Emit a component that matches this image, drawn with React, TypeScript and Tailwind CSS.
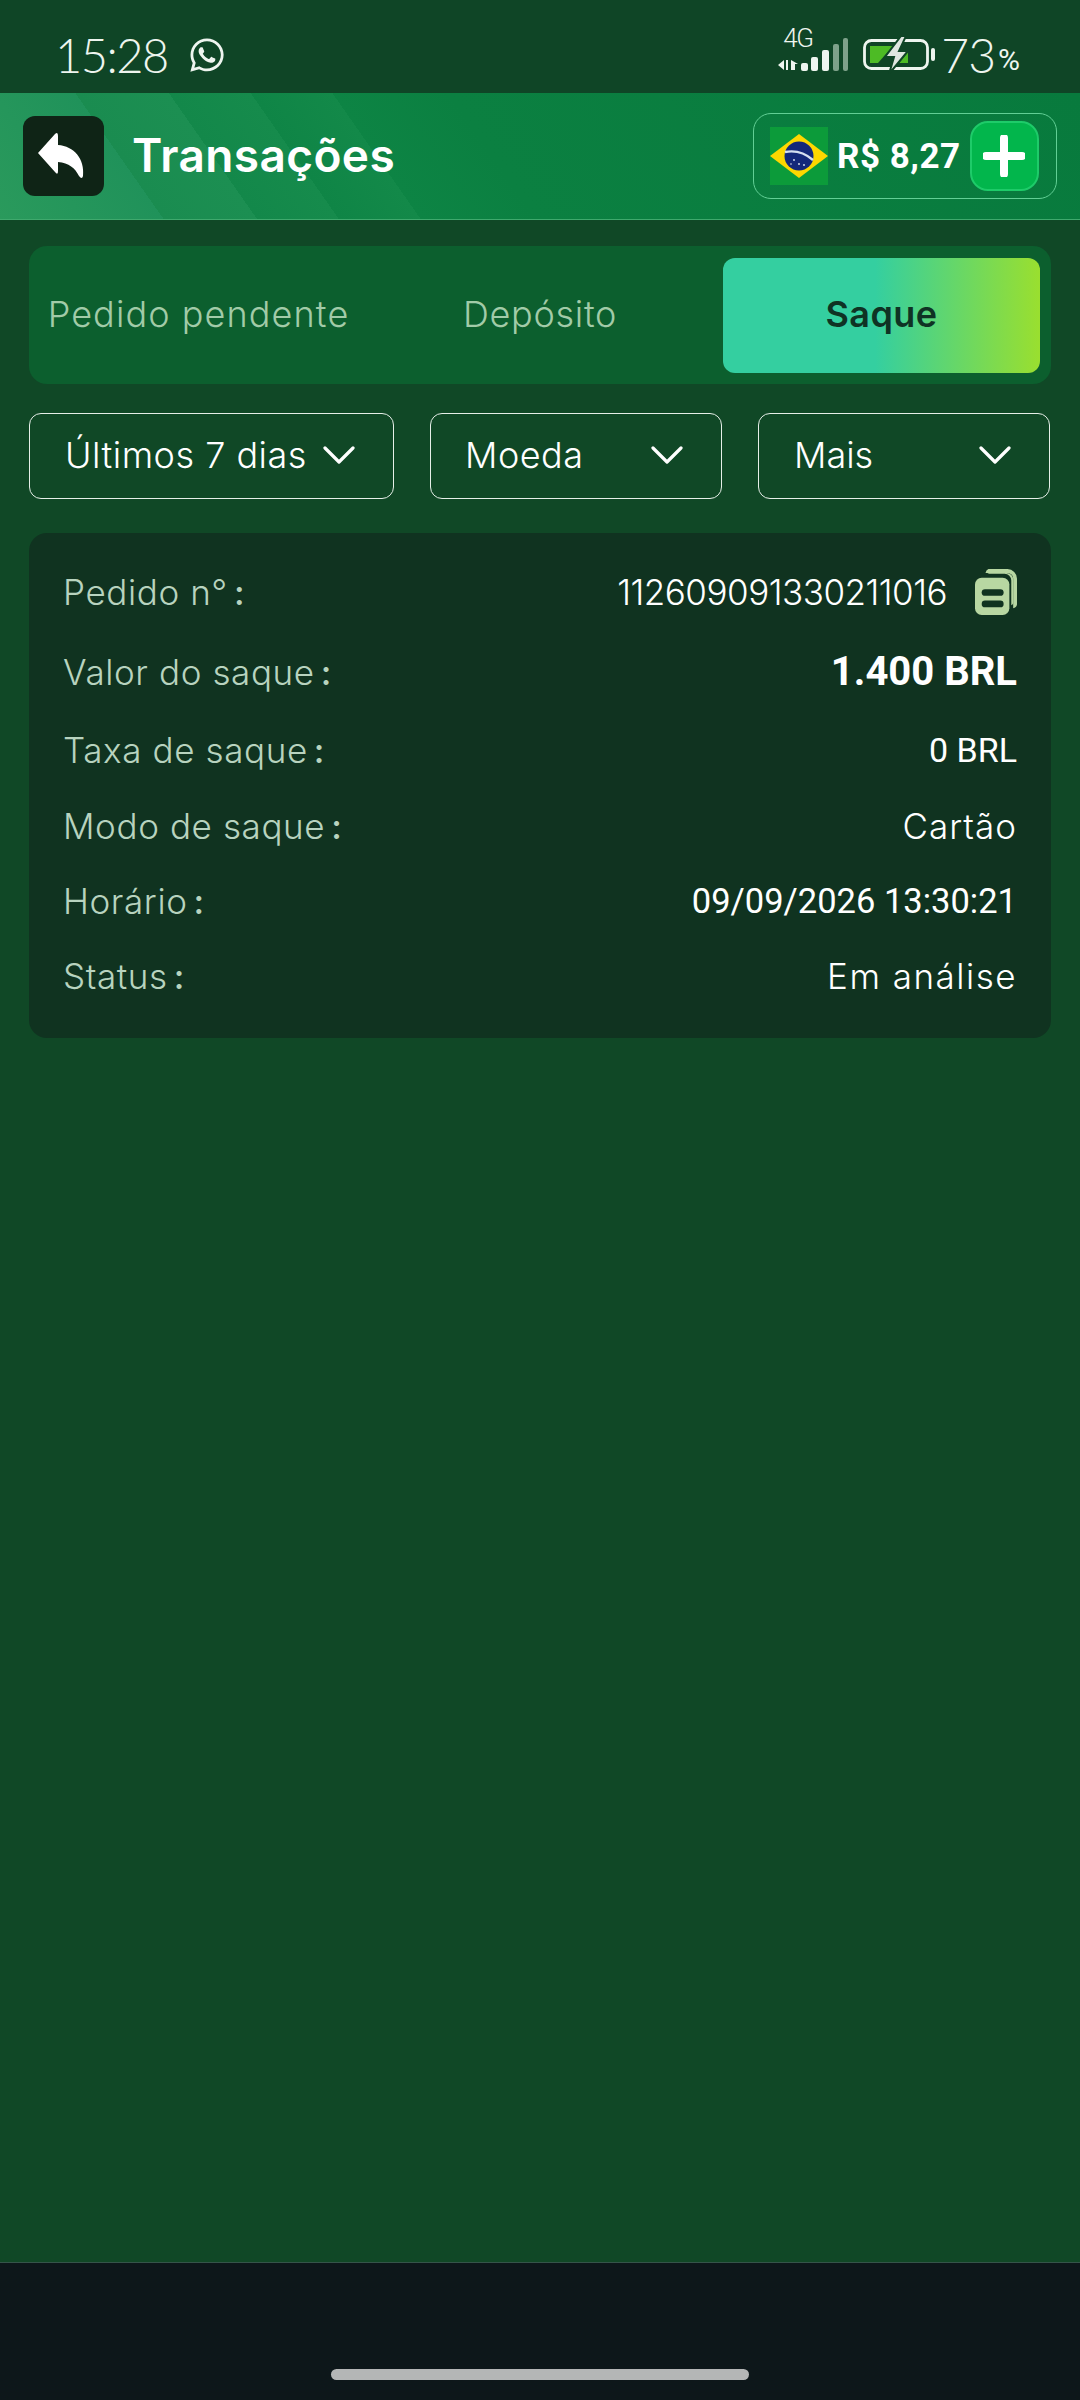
import React from "react";
import { FaWhatsapp } from "react-icons/fa";

const rows = [
  { label: "Pedido n°", value: "112609091330211016", h: "h-[80px]", cls: "font-['Inter',sans-serif] text-[35px] font-light tracking-[-0.5px]", copy: true },
  { label: "Valor do saque", value: "1.400 BRL", h: "h-[80px]", cls: "font-['Roboto',sans-serif] text-[40px] font-bold" },
  { label: "Taxa de saque", value: "0 BRL", h: "h-[77px]", cls: "font-['Roboto',sans-serif] text-[34px]" },
  { label: "Modo de saque", value: "Cartão", h: "h-[75px]", cls: "font-['Inter',sans-serif] text-[35px] font-light tracking-[1px]" },
  { label: "Horário", value: "09/09/2026 13:30:21", h: "h-[75px]", cls: "font-['Roboto',sans-serif] text-[34.5px]" },
  { label: "Status", value: "Em análise", h: "h-[75px]", cls: "font-['Inter',sans-serif] text-[35px] font-light tracking-[1.5px]" },
];

function Chevron() {
  return (
    <svg width="32" height="20" viewBox="0 0 32 20" fill="none" className="shrink-0">
      <path d="M2 3l14 14L30 3" stroke="#fff" strokeWidth="3.2" strokeLinecap="round" strokeLinejoin="round" />
    </svg>
  );
}

function Signal() {
  return (
    <svg width="70" height="34" viewBox="0 0 70 34" className="shrink-0">
      <path d="M0 27l6-5v10l-6-5zM8 22h2v10H8zM13 22l7 4h-3v6h-4z" fill="#eef5ef" />
      <rect x="23" y="25" width="7" height="8" rx="2" fill="#eef5ef" />
      <rect x="33" y="19" width="7" height="14" rx="2" fill="#eef5ef" />
      <rect x="44" y="12" width="7" height="21" rx="2" fill="#eef5ef" />
      <rect x="55" y="6" width="6" height="27" rx="2" fill="#7ea18a" />
      <rect x="65" y="0" width="5" height="33" rx="2" fill="#7ea18a" />
    </svg>
  );
}

function Battery() {
  return (
    <svg width="72" height="38" viewBox="0 0 72 38" className="shrink-0">
      <rect x="1.5" y="4.5" width="63" height="28" rx="7" fill="none" stroke="#eef5ef" strokeWidth="2.8" />
      <path d="M7 10h23L15 27H7z" fill="#4dbb25" />
      <path d="M36 27l9-11v11z" fill="#4dbb25" />
      <path d="M38 0L22 21h9l-5 17 19-23h-9l7-15z" fill="#dfe7e0" stroke="#0f4526" strokeWidth="2" />
      <rect x="68" y="12" width="4" height="13" rx="2" fill="#eef5ef" />
    </svg>
  );
}

function Flag() {
  return (
    <svg width="58" height="58" viewBox="0 0 58 58" className="shrink-0">
      <rect width="58" height="58" fill="#0c9b3a" />
      <path d="M29 7l29 22-29 22L0 29z" fill="#fed700" />
      <circle cx="29" cy="29" r="14.5" fill="#14287a" />
      <path d="M15 25c10-2 20 1 28 8" stroke="#d5dff0" strokeWidth="2.4" fill="none" />
      <circle cx="24" cy="33" r="0.9" fill="#dfe7f5" />
      <circle cx="29" cy="37" r="0.9" fill="#dfe7f5" />
      <circle cx="34" cy="38" r="0.9" fill="#dfe7f5" />
      <circle cx="21" cy="37" r="0.8" fill="#dfe7f5" />
    </svg>
  );
}

function BackArrow() {
  return (
    <svg width="81" height="80" viewBox="0 0 81 80">
      <path
        d="M15 37 L32 18 Q35 15 35 20 V29 C51 30 62 43 60 60 Q59 64 56 60 C52 52 46 47 35 46 V55 Q35 60 32 56 Z"
        fill="#fff"
      />
    </svg>
  );
}

function CopyIcon() {
  return (
    <svg width="42" height="46" viewBox="0 0 44 48" className="shrink-0">
      <path d="M14 0h20a10 10 0 0 1 10 10v27a5 5 0 0 1-4 4V10a6 6 0 0 0-6-6H11a6 6 0 0 1 3-4z" fill="#b8d7a2" />
      <path d="M18 4h15a7 7 0 0 1 7 7v24a3 3 0 0 1-2 3V12a7 7 0 0 0-7-7H13a6 6 0 0 1 5-1z" fill="#b8d7a2" />
      <rect x="0" y="9" width="36" height="39" rx="7" fill="#b8d7a2" />
      <rect x="7" y="21" width="23" height="7" rx="3.5" fill="#103320" />
      <rect x="7" y="33" width="23" height="7" rx="3.5" fill="#103320" />
    </svg>
  );
}

export default function App() {
  return (
    <div className="flex h-[2400px] w-[1080px] flex-col overflow-hidden bg-[#104826] font-['Inter',sans-serif] text-white">
      {/* status bar */}
      <div className="flex h-[93px] shrink-0 items-center justify-between bg-[#0f4526] pl-[55px] pr-[61px] pt-[17px] text-[#eef5ef]">
        <div className="flex items-center gap-[20px]">
          <span className="font-['Lato',sans-serif] text-[47px] font-light leading-none tracking-[-1.5px]">15:28</span>
          <FaWhatsapp className="text-[38px]" />
        </div>
        <div className="relative flex items-center">
          <span className="absolute left-[5px] top-[-6px] font-['Roboto',sans-serif] text-[26px] font-light leading-none tracking-[-1.5px]">4G</span>
          <Signal />
          <div className="ml-[15px]">
            <Battery />
          </div>
          <span className="ml-[6px] font-['Lato',sans-serif] text-[48px] font-light leading-none tracking-[-1px]">73</span>
          <span className="ml-[3px] mt-[10px] font-['Roboto',sans-serif] text-[30px] leading-none tracking-[-1px]">%</span>
        </div>
      </div>

      {/* header */}
      <div className="flex h-[127px] shrink-0 items-center justify-between border-b border-[#3fa96d] bg-[linear-gradient(55deg,#2a9a5c_0%,#20925a_14%,#1a8c50_14%,#1c8f52_22%,#13884a_22%,#168b4c_29%,#0f8546_29%,#138949_36%,#0d8444_36%,#0b8041_46%,#087a3d_100%)] px-[23px]">
        <div className="flex items-center">
          <button className="flex h-[80px] w-[81px] items-center justify-center rounded-[12px] bg-[#0f2416]">
            <BackArrow />
          </button>
          <h1 className="ml-[28px] pb-[3px] text-[46px] font-semibold leading-none tracking-[0.4px]">Transações</h1>
        </div>
        <div className="flex h-[86px] w-[304px] items-center rounded-[18px] border border-[#62cf95] pl-[16px]">
          <Flag />
          <span className="ml-[9px] font-['Roboto',sans-serif] text-[35px] font-bold leading-none tracking-[0.5px]">R$ 8,27</span>
          <button className="ml-[9px] flex h-[70px] w-[69px] items-center justify-center rounded-[18px] border-2 border-[#1ecb69] bg-[#02b64c]">
            <svg width="42" height="42" viewBox="0 0 42 42">
              <path d="M21 3v36M3 21h36" stroke="#fff" strokeWidth="8" strokeLinecap="round" />
            </svg>
          </button>
        </div>
      </div>

      <div className="flex flex-col px-[29px] pt-[26px]">
        {/* tabs */}
        <div className="flex h-[138px] items-center justify-between rounded-[18px] bg-[#0c5f2e] px-[11px]">
          <div className="flex h-[115px] w-[317px] items-center justify-center pb-[2px] text-[36px] font-light tracking-[1.1px] whitespace-nowrap text-[#a2cba8]">Pedido pendente</div>
          <div className="flex h-[115px] w-[317px] items-center justify-center pb-[2px] text-[36px] font-light tracking-[0.7px] text-[#a2cba8]">Depósito</div>
          <div className="flex h-[115px] w-[317px] items-center justify-center rounded-[12px] bg-[linear-gradient(90deg,#34cfa0_0%,#34cfa0_48%,#9adf2f_100%)] pb-[2px] text-[36px] font-semibold tracking-[0.4px] text-[#0f3324]">Saque</div>
        </div>

        {/* filters */}
        <div className="mt-[29px] flex gap-[36px]">
          <div className="flex h-[86px] w-[365px] items-center justify-between rounded-[12px] border border-[#e6efe8] pb-[2px] pl-[35px] pr-[38px] text-[36px] font-light tracking-[0.5px]">
            <span className="whitespace-nowrap">Últimos 7 dias</span>
            <Chevron />
          </div>
          <div className="flex h-[86px] w-[292px] items-center justify-between rounded-[12px] border border-[#e6efe8] pb-[2px] pl-[34px] pr-[38px] text-[36px] font-light tracking-[0.5px]">
            <span>Moeda</span>
            <Chevron />
          </div>
          <div className="flex h-[86px] w-[292px] items-center justify-between rounded-[12px] border border-[#e6efe8] pb-[2px] pl-[35px] pr-[38px] text-[36px] font-light">
            <span>Mais</span>
            <Chevron />
          </div>
        </div>

        {/* order card */}
        <div className="mt-[34px] flex h-[505px] flex-col rounded-[18px] bg-[#103320] px-[34px] pt-[19px]">
          {rows.map((row) => (
            <div key={row.label} className={`flex items-center justify-between ${row.h}`}>
              <span className="text-[35px] font-light tracking-[0.6px] text-[#b8d3bf]">
                {row.label}
                <span className="ml-[6px] font-medium">:</span>
              </span>
              <div className="flex items-center gap-[28px]">
                <span className={row.cls}>{row.value}</span>
                {row.copy && <CopyIcon />}
              </div>
            </div>
          ))}
        </div>
      </div>

      <div className="flex-1" />

      {/* nav bar */}
      <div className="flex h-[138px] shrink-0 flex-col items-center justify-end border-t border-[#35544a] bg-[#0d171a] pb-[20px]">
        <div className="h-[11px] w-[418px] rounded-full bg-[#b4b6b6]" />
      </div>
    </div>
  );
}
